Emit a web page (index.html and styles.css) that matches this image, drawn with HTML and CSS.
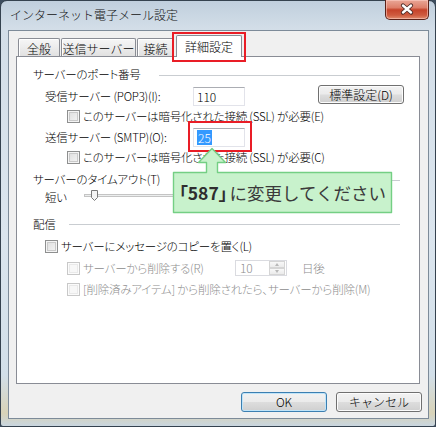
FILE: index.html
```html
<!DOCTYPE html>
<html lang="ja">
<head>
<meta charset="utf-8">
<title>インターネット電子メール設定</title>
<link rel="stylesheet" href="styles.css">
</head>
<body>
<div class="window">
  <div class="titlebar">
    <span class="title">インターネット電子メール設定</span>
    <div class="close">
      <svg width="44" height="20" viewBox="0 0 44 20">
        <path d="M18 6.5 L26 13.5 M26 6.5 L18 13.5" stroke="#4a2a26" stroke-width="4.2" stroke-linecap="round"/>
        <path d="M18 6.5 L26 13.5 M26 6.5 L18 13.5" stroke="#ffffff" stroke-width="2.4" stroke-linecap="round"/>
      </svg>
    </div>
  </div>
  <div class="client">
    <div class="tabs">
      <div class="tab t1">全般</div>
      <div class="tab t2">送信サーバー</div>
      <div class="tab t3">接続</div>
      <div class="tab active">詳細設定</div>
    </div>
    <div class="panel">
      <div class="grp g1"><span>サーバーのポート番号</span><i class="rule"></i></div>
      <div class="row field r-pop">
        <span class="flabel">受信サーバー (POP3)(I):</span>
        <div class="textbox"><span>110</span></div>
        <div class="btn small">標準設定(D)</div>
      </div>
      <div class="row chkrow lv2 r-c1"><span class="chk"></span><span>このサーバーは暗号化された接続 (SSL) が必要(E)</span></div>
      <div class="row field r-smtp">
        <span class="flabel">送信サーバー (SMTP)(O):</span>
        <div class="textbox"><span class="sel">25</span></div>
      </div>
      <div class="row chkrow lv2 r-c2"><span class="chk"></span><span>このサーバーは暗号化された接続 (SSL) が必要(C)</span></div>
      <div class="grp g2"><span>サーバーのタイムアウト(T)</span><i class="rule"></i></div>
      <div class="row r-slider">
        <span class="short">短い</span>
        <svg class="slider" width="200" height="14" viewBox="0 0 200 14">
          <rect x="0.5" y="5.5" width="199" height="2" fill="#eceeee" stroke="#c4c4c4"/>
          <path d="M7.5 1.5 H13.5 V8.5 L10.5 11.5 L7.5 8.5 Z" fill="#f4f4f4" stroke="#7a7a7a"/>
        </svg>
      </div>
      <div class="grp g3"><span>配信</span><i class="rule"></i></div>
      <div class="row chkrow lv1 r-copy"><span class="chk"></span><span>サーバーにメッセージのコピーを置く(L)</span></div>
      <div class="row chkrow lv2 dis r-del">
        <span class="chk"></span><span class="dlabel">サーバーから削除する(R)</span>
        <div class="spin"><span>10</span><div class="spinbtns"><i class="up"></i><i class="down"></i></div></div>
        <span class="days">日後</span>
      </div>
      <div class="row chkrow lv2 dis r-del2"><span class="chk"></span><span>[削除済みアイテム] から削除されたら、サーバーから削除(M)</span></div>
    </div>
    <div class="buttons">
      <div class="btn big ok">OK</div>
      <div class="btn big">キャンセル</div>
    </div>
  </div>
  <div class="redbox rb-tab"></div>
  <div class="redbox rb-smtp"></div>
  <div class="callout">
    <svg width="226" height="76" viewBox="0 0 226 76">
      <path d="M3.5 32.5 H36.5 V22.5 H28.5 L42 8.5 L55.5 22.5 H47.5 V32.5 H221.5 V72.5 H3.5 Z" fill="#c8f2cc" stroke="#74cf84" stroke-width="1.4" stroke-linejoin="round"/>
    </svg>
    <div class="ctext"><b>「587」</b>に変更してください</div>
  </div>
</div>
</body>
</html>
```
FILE: styles.css
```css
* { box-sizing: border-box; }
html, body { margin: 0; padding: 0; }
body {
  width: 436px;
  height: 427px;
  overflow: hidden;
  background: #3d4d5e;
  font-family: "Noto Sans CJK JP", "Noto Sans", sans-serif;
  color: #000;
}
.window {
  position: relative;
  width: 436px;
  height: 427px;
  border: 1px solid #35424f;
  border-radius: 7px 7px 3px 3px;
  background: linear-gradient(180deg, #c0cfdd 0, #d3dee8 28px, #dbe5ee 55%, #d2dfe9 88%, #d8d3b8 97%, #c9d6e0 100%);
  padding: 0 6px 7px 7px;
  display: flex;
  flex-direction: column;
}
.titlebar {
  height: 29px;
  display: flex;
  align-items: center;
  padding: 0 0 2px 2px;
}
.title {
  font-size: 12px;
  line-height: 14px;
  color: #111;
  font-weight: 300;
}
.close {
  margin-left: auto;
  align-self: flex-start;
  margin-top: -1px;
  width: 44px;
  height: 20px;
  border: 1px solid #5a2219;
  border-top: none;
  border-radius: 0 0 5px 5px;
  background: linear-gradient(180deg, #e9a797 0, #de7f6a 40%, #c5432a 52%, #cf5b3f 80%, #e08d6e 100%);
  box-shadow: inset 0 0 0 1px rgba(255, 210, 200, 0.55);
}
.close svg { display: block; margin: -1px 0 0 -1px; }

.client {
  height: 389px;
  background: #f0f0f0;
  border: 1px solid #7d8b99;
  padding: 4px 0 0 7px;
}
.tabs {
  display: flex;
  align-items: flex-end;
  height: 21px;
  padding-left: 2px;
  font-size: 12px;
  font-weight: 300;
}
.tab {
  height: 18px;
  padding-top: 2px;
  line-height: 16px;
  text-align: center;
  border: 1px solid #8a8d95;
  border-bottom: none;
  border-radius: 2px 2px 0 0;
  background: linear-gradient(180deg, #f6f6f6 0, #ececec 50%, #e1e1e1 100%);
  box-shadow: inset 1px 1px 0 #fff;
  margin-right: 1px;
}
.t1 { width: 42px; }
.t2 { width: 75px; }
.t3 { width: 37px; }
.tab.active {
  width: 66px;
  height: 22px;
  padding-top: 3px;
  margin-left: 1px;
  margin-bottom: -1px;
  background: #fff;
  box-shadow: none;
  position: relative;
  z-index: 2;
}

.panel {
  position: relative;
  z-index: 1;
  width: 404px;
  height: 328px;
  background: #fff;
  border: 1px solid #898c95;
  padding: 7px 19px 0 16px;
  font-size: 11.5px;
  letter-spacing: -0.2px;
  font-weight: 300;
  font-feature-settings: "palt";
}
.grp, .row {
  display: flex;
  align-items: center;
  height: 20px;
  line-height: 14px;
  white-space: nowrap;
}
.grp .rule {
  flex: 1;
  height: 0;
  border-top: 1px solid #c9cdd1;
  margin-left: 18px;
  margin-top: 3px;
}
.g2 .rule { margin-left: 20px; }
.g3 .rule { margin-left: 13px; margin-top: 1px; }
.g2 { margin-top: 3px; height: 18px; }
.g3 { margin-top: 8px; }

.field .flabel {
  margin-left: 12px;
  width: 148px;
}
.r-pop { margin-top: 2px; }
.r-smtp { margin-top: 1px; }
.textbox {
  width: 52px;
  height: 19px;
  border: 1px solid #e2e3ea;
  border-top-color: #abadb3;
  padding: 1px 0 0 3px;
  line-height: 15px;
  background: #fff;
  font-size: 12px;
  letter-spacing: 0;
}
.textbox .sel {
  display: inline-block;
  background: #3399ff;
  color: #fff;
  padding: 0 1px;
}
.btn {
  display: flex;
  align-items: center;
  justify-content: center;
  border: 1px solid #707070;
  border-radius: 3px;
  background: linear-gradient(180deg, #f2f2f2 0, #ebebeb 48%, #dddddd 52%, #cfcfcf 100%);
  box-shadow: inset 0 0 0 1px #fcfcfc;
  font-size: 12px;
  line-height: 14px;
  font-weight: 300;
  letter-spacing: 0;
}
.btn.small {
  margin-left: auto;
  margin-right: -4px;
  align-self: flex-start;
  margin-top: -1px;
  width: 86px;
  height: 19px;
}
.chkrow .chk {
  flex: none;
  width: 13px;
  height: 13px;
  border: 1px solid #8e8f8f;
  background: linear-gradient(135deg, #dcdcdc 0, #f6f6f6 100%);
  box-shadow: inset 0 0 0 1px #f4f4f4, inset 0 0 0 2px #c9c9c9;
  margin-right: 3px;
}
.lv1 { padding-left: 12px; }
.lv2 { padding-left: 34px; }
.dis { color: #8d8d8d; }
.dis .chk {
  border-color: #c8c8c8;
  background: #f7f7f7;
  box-shadow: inset 0 0 0 1px #fbfbfb, inset 0 0 0 2px #e9e9e9;
}
.r-slider { height: 18px; }
.short { margin-left: 12px; }
.slider { margin-left: 17px; margin-top: -2px; }
.r-copy { margin-top: 2px; }
.r-del { margin-top: 2px; }
.r-del2 { margin-top: 1px; }
.dlabel { width: 152px; }
.spin {
  width: 52px;
  height: 16px;
  border: 1px solid #dadbe0;
  padding: 0 0 0 4px;
  line-height: 14px;
  display: flex;
  align-items: center;
  font-size: 12px;
}
.spinbtns {
  margin-left: auto;
  width: 16px;
  height: 14px;
  display: flex;
  flex-direction: column;
  margin-right: 1px;
}
.spinbtns i {
  flex: 1;
  border: 1px solid #d5d5d5;
  background: linear-gradient(180deg, #f8f8f8, #ebebeb);
  position: relative;
}
.spinbtns i::after {
  content: "";
  position: absolute;
  left: 5px;
  top: 1px;
  border-left: 2.5px solid transparent;
  border-right: 2.5px solid transparent;
}
.spinbtns .up::after { border-bottom: 3px solid #b8b8b8; }
.spinbtns .down::after { border-top: 3px solid #b8b8b8; }
.days { margin-left: 15px; }

.buttons {
  display: flex;
  justify-content: flex-end;
  gap: 9px;
  margin-top: 8px;
  padding-right: 6px;
}
.btn.big {
  width: 86px;
  height: 20px;
}
.btn.ok {
  border-color: #3c7fb1;
  box-shadow: inset 0 0 0 1px #bfe4f9;
}

.redbox {
  position: absolute;
  border: 2px solid #e91d26;
  z-index: 5;
}
.rb-tab { left: 171px; top: 31px; width: 74px; height: 30px; }
.rb-smtp { left: 187px; top: 120px; width: 64px; height: 31px; }

.callout {
  position: absolute;
  left: 169px;
  top: 139px;
  width: 226px;
  height: 76px;
  z-index: 6;
}
.callout svg { position: absolute; left: 0; top: 0; }
.ctext {
  position: absolute;
  left: 4px;
  top: 33px;
  width: 217px;
  height: 39px;
  display: flex;
  align-items: center;
  justify-content: center;
  font-size: 17.5px;
  color: #3a3a3a;
  white-space: nowrap;
}
.ctext b {
  font-weight: 700;
  color: #2e2e2e;
  font-feature-settings: "palt";
  margin-right: 2px;
}
```
